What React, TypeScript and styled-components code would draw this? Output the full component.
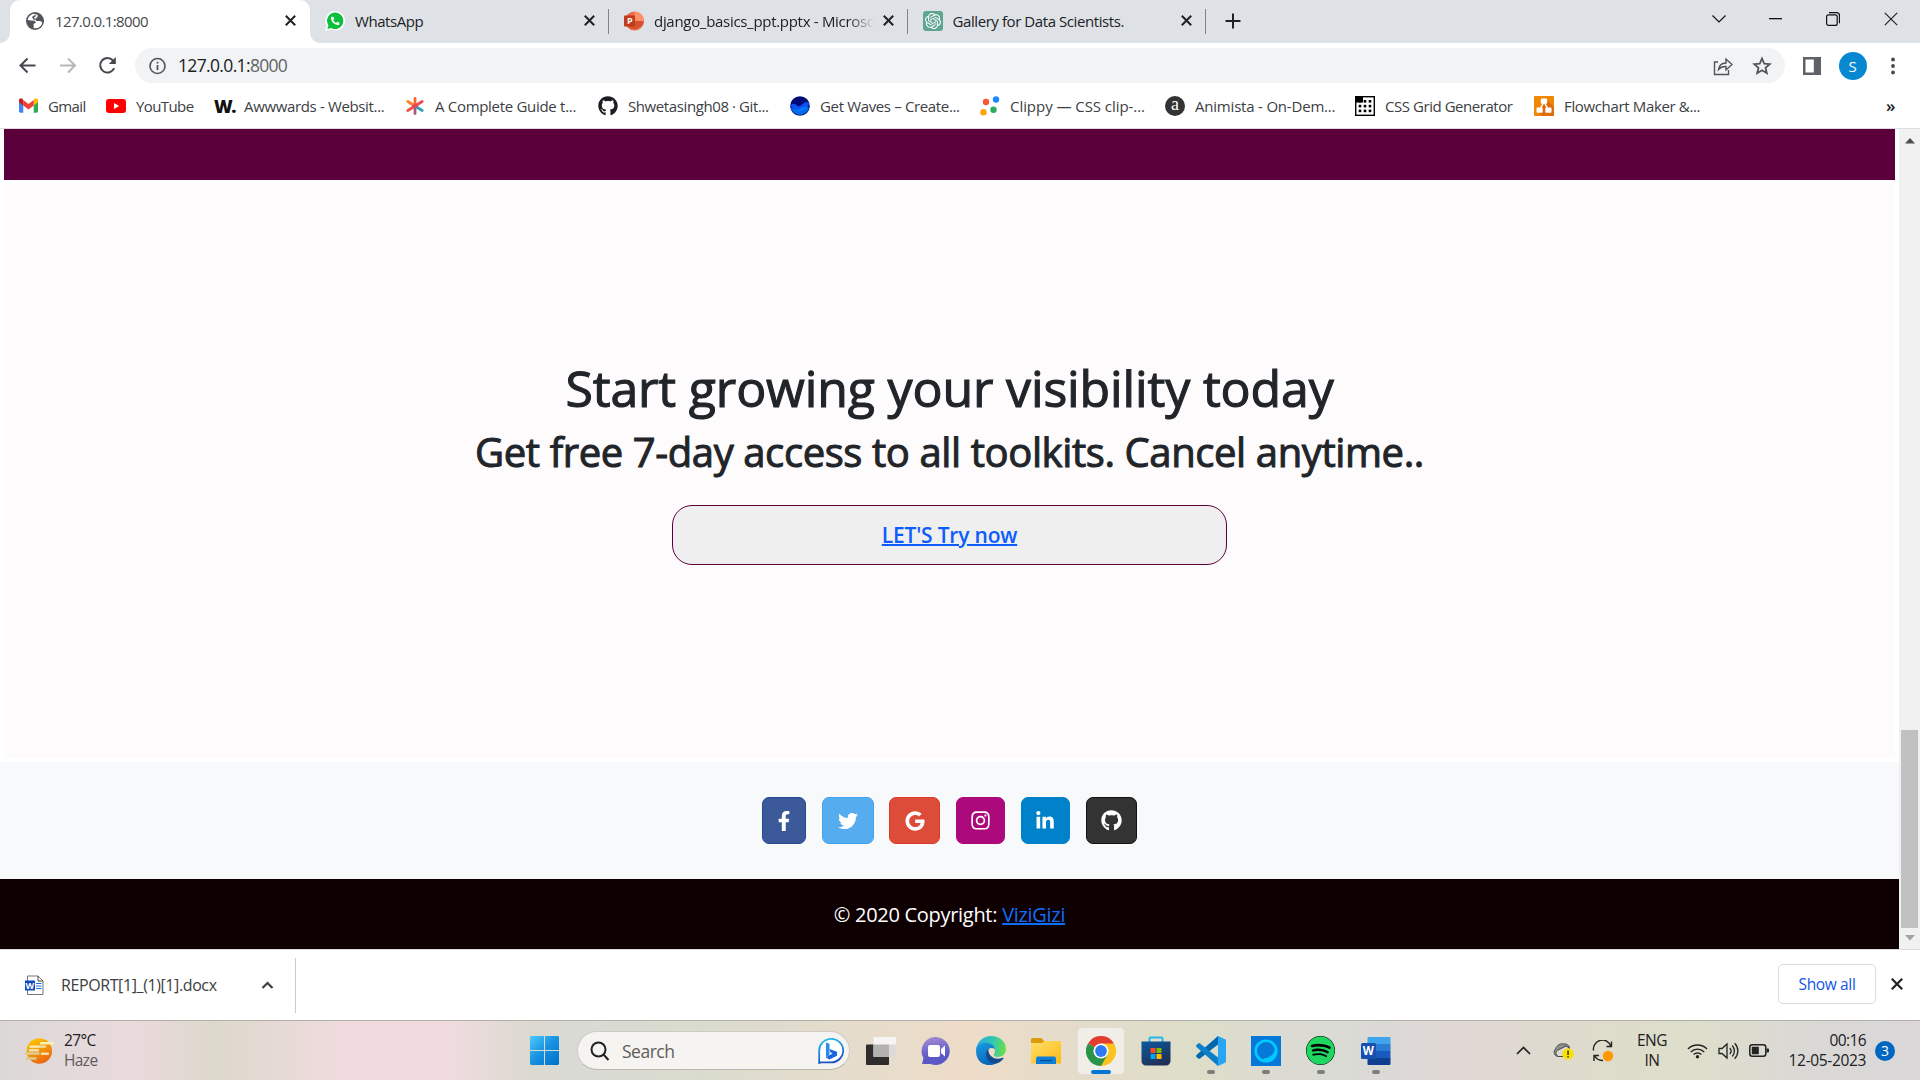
import React from "react";
import styled, { createGlobalStyle } from "styled-components";
import { FaFacebookF, FaTwitter, FaGoogle, FaInstagram, FaLinkedinIn, FaGithub, FaPhoneAlt, FaSpotify } from "react-icons/fa";
import { SiOpenai } from "react-icons/si";

const Global = createGlobalStyle`
  * { box-sizing: border-box; }
  body { margin: 0; overflow: hidden; background: #fff; font-family: "Open Sans", "Noto Sans", sans-serif; }
  svg { display: block; flex: none; }
`;

const Screen = styled.div`
  width: 1920px;
  height: 1080px;
  display: flex;
  flex-direction: column;
  overflow: hidden;
  color: #202124;
`;

const Text = styled.span<{ $size?: number; $track?: number; $color?: string; $weight?: number }>`
  font-size: ${(p) => p.$size ?? 15}px;
  letter-spacing: ${(p) => p.$track ?? -0.4}px;
  color: ${(p) => p.$color ?? "#202124"};
  font-weight: ${(p) => p.$weight ?? 400};
  line-height: 20px;
  white-space: nowrap;
`;

/* ---------- tab strip ---------- */
const TabStrip = styled.div`
  flex: none;
  height: 43px;
  background: #dee1e6;
  display: flex;
  padding-left: 10px;
`;

const Tab = styled.div<{ $active?: boolean; $width: number; $line?: boolean }>`
  position: relative;
  width: ${(p) => p.$width}px;
  height: 43px;
  display: flex;
  align-items: center;
  padding: 0 14px 2px 15px;
  border-radius: 10px 10px 0 0;
  background: ${(p) => (p.$active ? "#fff" : "transparent")};
  &::before, &::after {
    content: "";
    position: absolute;
    bottom: 0;
    width: 10px;
    height: 10px;
    display: ${(p) => (p.$active ? "block" : "none")};
  }
  &::before { left: -10px; background: radial-gradient(circle at 0 0, transparent 9.5px, #fff 10px); }
  &::after { right: -10px; background: radial-gradient(circle at 100% 0, transparent 9.5px, #fff 10px); }
  ${(p) => p.$line && `&::after { display: block; right: 0; bottom: 9px; width: 1px; height: 25px; background: #808387; }`}
`;

const TabTitle = styled.div<{ $fade?: boolean }>`
  flex: 1;
  margin: 0 9px 0 10px;
  overflow: hidden;
  display: flex;
  ${(p) => p.$fade && `mask-image: linear-gradient(90deg, #000 88%, transparent);`}
`;

const NewTab = styled.div`
  width: 54px;
  display: grid;
  place-items: center;
  padding-bottom: 1px;
`;

const WindowButtons = styled.div`
  margin-left: auto;
  height: 37px;
  display: grid;
  grid-template-columns: 57px 57px 58px 58px;
  align-items: center;
  justify-items: center;
`;

/* ---------- toolbar ---------- */
const Toolbar = styled.div`
  flex: none;
  height: 45px;
  display: flex;
  align-items: center;
  padding: 0 17px 0 17px;
  background: #fff;
`;

const NavButtons = styled.div`
  width: 118px;
  display: flex;
  gap: 18.5px;
`;

const Omnibox = styled.div`
  width: 1650px;
  height: 35px;
  border-radius: 18px;
  background: #f1f3f4;
  display: flex;
  align-items: center;
  padding: 0 13px 0 12px;
`;

const Url = styled.div`
  flex: 1;
  margin-left: 11px;
  padding-bottom: 1px;
  display: flex;
`;

const OmniActions = styled.div`
  display: flex;
  align-items: center;
  gap: 19px;
`;

const BrowserActions = styled.div`
  flex: 1;
  display: flex;
  align-items: center;
  justify-content: space-between;
  padding-left: 17px;
`;

const Avatar = styled.div`
  width: 28px;
  height: 28px;
  border-radius: 50%;
  background: #0788d1;
  color: #fff;
  font-size: 15px;
  display: grid;
  place-items: center;
`;

const Bookmarks = styled.div`
  flex: none;
  height: 41px;
  border-bottom: 1px solid #dadce0;
  display: flex;
  align-items: center;
  padding: 0 0 5px 19px;
  background: #fff;
`;

const Bookmark = styled.div<{ $width: number }>`
  width: ${(p) => p.$width}px;
  display: flex;
  align-items: center;
  gap: 10px;
`;

const Glyph = styled.span`
  width: 20px;
  font: 800 18px/20px "Open Sans", sans-serif;
  letter-spacing: -1.5px;
  color: #111;
`;

const Round = styled.span`
  width: 20px;
  height: 20px;
  border-radius: 50%;
  background: #333;
  color: #fff;
  font: 400 18px/17px "Liberation Serif", serif;
  text-align: center;
`;

const More = styled.span`
  margin-left: auto;
  width: 34px;
  font-size: 17px;
  font-weight: 600;
  line-height: 20px;
`;

/* ---------- page ---------- */
const Viewport = styled.div`
  flex: none;
  height: 820px;
  display: flex;
`;

const Page = styled.main`
  width: 1899px;
  display: flex;
  flex-direction: column;
  background: #fff;
`;

const Banner = styled.div`
  height: 51px;
  margin: 0 4px;
  background: #5c003c;
`;

const Hero = styled.section`
  height: 574px;
  margin: 4px 4px;
  background: #fefbfc;
  display: flex;
  flex-direction: column;
  align-items: center;
  padding-top: 174px;
`;

const Title = styled.h1`
  margin: 0;
  font-size: 50px;
  font-weight: 400;
  line-height: 60px;
  letter-spacing: -0.14px;
  color: #212529;
  -webkit-text-stroke: 1.1px #212529;
  white-space: nowrap;
`;

const Subtitle = styled.h2`
  margin: 10px 0 0;
  font-size: 40px;
  font-weight: 400;
  line-height: 48px;
  letter-spacing: -0.4px;
  color: #212529;
  -webkit-text-stroke: 1px #212529;
  white-space: nowrap;
`;

const TryButton = styled.button`
  margin-top: 29px;
  width: 555px;
  height: 60px;
  border: 1px solid #5c003c;
  border-radius: 20px;
  background: #efefef;
  padding: 0;
  font-family: inherit;
`;

const TryLink = styled.a`
  font-size: 21px;
  font-weight: 600;
  letter-spacing: -0.2px;
  color: #0d5cfd;
  text-decoration: underline;
  text-decoration-thickness: 2px;
`;

const Socials = styled.div`
  height: 117px;
  background: #f8f9fb;
  display: flex;
  align-items: center;
  justify-content: center;
  gap: 15.8px;
`;

const Social = styled.a<{ $width: number; $color: string; $edge: string }>`
  width: ${(p) => p.$width}px;
  height: 47px;
  border: 1px solid ${(p) => p.$edge};
  border-radius: 7px;
  background: ${(p) => p.$color};
  color: #fff;
  font-size: 20px;
  display: grid;
  place-items: center;
`;

const Copyright = styled.footer`
  height: 70px;
  background: #0e0001;
  color: #fff;
  font-size: 20px;
  letter-spacing: -0.3px;
  display: flex;
  gap: 5px;
  align-items: center;
  justify-content: center;
`;

const FooterLink = styled.a`
  color: #0d6efd;
  text-decoration: underline;
`;

const Scrollbar = styled.div`
  width: 21px;
  background: #f1f1f1;
  display: flex;
  flex-direction: column;
  align-items: center;
  padding: 9px 0 8px;
`;

const Thumb = styled.div`
  width: 17px;
  height: 198px;
  margin: auto 0 7px;
  background: #c1c1c1;
`;

/* ---------- download shelf ---------- */
const Shelf = styled.div`
  flex: none;
  height: 71px;
  border-top: 1px solid #dadce0;
  background: #fff;
  display: flex;
  align-items: center;
  padding: 0 17px 2px 25px;
`;

const Download = styled.div`
  width: 271px;
  height: 55px;
  margin-top: 2px;
  border-right: 1px solid #c8cacd;
  display: flex;
  align-items: center;
`;

const FileName = styled.div`
  width: 217px;
  padding-left: 17px;
  display: flex;
`;

const ShowAll = styled.button`
  margin-left: auto;
  margin-right: 15px;
  width: 98px;
  height: 40px;
  border: 1px solid #dadce0;
  border-radius: 5px;
  background: #fff;
  padding: 0;
  font-family: inherit;
`;

/* ---------- taskbar ---------- */
const Taskbar = styled.div`
  flex: none;
  height: 60px;
  border-top: 1px solid #b4b1ab;
  background: linear-gradient(90deg, #dcd8d8 0, #eadadc 130px, #ddd8cc 215px, #efdbdd 340px, #efdbde 455px, #dcd9cf 530px, #d9dad5 580px, #d9dccd 700px, #e2dccd 800px, #eddcc8 970px, #e4dccb 1080px, #dddec8 1190px, #dbdbd3 1280px, #dad9d6 1380px, #e0d8d5 1460px, #dedccb 1600px, #dddecb 1700px, #dad9d4 1790px, #dbd7da 1920px);
  display: flex;
  align-items: center;
`;

const Weather = styled.div`
  width: 530px;
  padding-left: 24px;
  display: flex;
  align-items: center;
  gap: 9px;
`;

const Stack = styled.div<{ $align?: string }>`
  display: flex;
  flex-direction: column;
  align-items: ${(p) => p.$align ?? "flex-start"};
  padding-bottom: 2px;
`;

const SearchBox = styled.div`
  width: 273px;
  height: 39px;
  margin: 0 15px 0 18px;
  border: 1px solid #cfccc5;
  border-bottom-color: #b9b6af;
  border-radius: 20px;
  background: #f5f4f1;
  display: flex;
  align-items: center;
  padding: 0 5px 0 12px;
`;

const SearchText = styled.div`
  flex: 1;
  padding-left: 12px;
  display: flex;
`;

const Apps = styled.div`
  display: grid;
  grid-template-columns: repeat(10, 55px);
  height: 59px;
  margin-left: -12px;
`;

const AppSlot = styled.div`
  position: relative;
  display: grid;
  place-items: center;
`;

const ActiveTile = styled.div`
  width: 48px;
  height: 48px;
  border-radius: 5px;
  background: #f1eee7;
  border: 1px solid #e2ded6;
  display: grid;
  place-items: center;
`;

const SpotifyDisc = styled.span`
  border-radius: 50%;
  background: #000;
`;

const Indicator = styled.span<{ $active?: boolean }>`
  position: absolute;
  left: 50%;
  bottom: 6px;
  transform: translateX(-50%);
  width: ${(p) => (p.$active ? 20 : 8)}px;
  height: 4px;
  border-radius: 2px;
  background: ${(p) => (p.$active ? "#0078d4" : "#7f7d79")};
`;

const Tray = styled.div`
  flex: 1;
  display: flex;
  align-items: center;
  justify-content: flex-end;
  padding-right: 25px;
`;

const TrayItem = styled.div<{ $width: number; $end?: boolean }>`
  width: ${(p) => p.$width}px;
  display: grid;
  align-items: center;
  justify-items: ${(p) => (p.$end ? "end" : "center")};
`;

const Badge = styled.div`
  width: 20px;
  height: 20px;
  margin-left: 9px;
  border-radius: 50%;
  background: #0067c0;
  color: #fff;
  font-size: 14px;
  line-height: 19px;
  text-align: center;
`;

/* ---------- drawings ---------- */
const Close = ({ s = 11, w = 2 }: { s?: number; w?: number }) => (
  <svg width={s} height={s} viewBox={`0 0 ${s} ${s}`} stroke="#202124" strokeWidth={w} fill="none"><path d={`M.8 .8L${s - 0.8} ${s - 0.8}M${s - 0.8} .8L.8 ${s - 0.8}`} /></svg>
);

const Globe = () => (
  <svg width="20" height="20" viewBox="0 0 20 20"><circle cx="10" cy="10" r="9" fill="#50555b" /><path d="M8.600 2.800C5.500 3.500 3 5.800 2.700 9l3.300.6 3.800.2 1.200 1.700-2.400 1.600.1 4.100c4 .8 7.900-1.700 8.600-5.700l-2-1.500-3.600-.1-2-1.700 2.700-1.900.4-2.300z" fill="#fff" /><path d="M10.500 4.300L8 6.300l1.500 2.400" fill="none" stroke="#50555b" strokeWidth="1.600" /></svg>
);

const WhatsApp = () => (
  <svg width="20" height="20" viewBox="0 0 20 20"><path d="M10.200 0A9.800 9.800 0 1 1 5.500 18.400L0 20l1.700-5.200A9.800 9.800 0 0 1 10.200 0z" fill="#fff" /><path d="M10.200 1.600A8.200 8.200 0 1 1 6 16.900L2.300 18l1.200-3.600A8.200 8.200 0 0 1 10.200 1.600z" fill="#0abf3a" /><FaPhoneAlt x="5.900" y="5.400" size={8.800} color="#fff" /></svg>
);

const PowerPoint = () => (
  <svg width="20" height="22" viewBox="0 0 20 22"><circle cx="10.500" cy="11" r="9.500" fill="#ed6c47" /><path d="M10.500 1.500A9.500 9.500 0 0 1 20 11h-9.500z" fill="#ff8f6b" /><path d="M1.200 11H20a9.500 9.500 0 0 1-18.800 0z" fill="#d35230" /><rect x="0" y="5.500" width="11" height="11" rx="1" fill="#c13b1b" /><text x="3" y="14.200" fontSize="9" fontWeight="700" fill="#fff" fontFamily="Open Sans">P</text></svg>
);

const Gmail = () => (
  <svg width="19" height="15" viewBox="0 0 20 15"><path d="M0 2v11.500A1.500 1.500 0 0 0 1.500 15H4.500V6z" fill="#4285f4" /><path d="M20 2v11.500a1.500 1.500 0 0 1-1.500 1.500H15.500V6z" fill="#34a853" /><path d="M15.500 1.700V7.500L20 4V2c0-1.800-2-2.700-3.500-1.500z" fill="#fbbc04" /><path d="M4.500 7.500V1.700L10 5.800l5.500-4.100v5.800L10 11.600z" fill="#ea4335" /><path d="M0 2v2l4.500 3.500V1.700L3.500.5C2-.7 0 .2 0 2z" fill="#c5221f" /></svg>
);

const YouTube = () => (
  <svg width="20" height="14" viewBox="0 0 20 14"><rect width="20" height="14" rx="3" fill="#f00" /><path d="M8 4l5.200 3L8 10z" fill="#fff" /></svg>
);

const Asterisk = () => (
  <svg width="20" height="20" viewBox="0 0 20 20" strokeWidth="2.800" strokeLinecap="round" fill="none"><path d="M10 10V2.500" stroke="#f26a2e" /><path d="M10 10L2.800 5.500" stroke="#f98230" /><path d="M10 10l7.200-4.500" stroke="#ee4b52" /><path d="M10 10l-7.200 4.500" stroke="#f0503c" /><path d="M10 10v7.500" stroke="#a9587f" /><path d="M10 10l7.200 4.500" stroke="#2ea3b8" /><path d="M8.500 10h3" stroke="#e8484d" /></svg>
);

const Waves = () => (
  <svg width="20" height="20" viewBox="0 0 20 20"><circle cx="10" cy="10" r="9.800" fill="#000b76" /><path d="M.3 9c3-2.200 5.200-1 7 .7 2.600 2.400 5.200-2.500 8-3.400 1.500-.5 2.800 0 4 .8a9.800 9.800 0 0 1-19 1.900z" fill="#0a50f5" /><path d="M.4 11.500c5 3 7 2.500 9.600 1 3-2 6-2.500 9.300-.5a9.800 9.800 0 0 1-18.900-.5z" fill="#0080ff" opacity=".8" /></svg>
);

const Clippy = () => (
  <svg width="20" height="20" viewBox="0 0 20 20"><circle cx="6" cy="6" r="3.200" fill="#fa5535" /><circle cx="16" cy="3.500" r="3.200" fill="#1e88ff" /><circle cx="3.500" cy="16.300" r="3.200" fill="#ffa500" /><circle cx="13.500" cy="13.700" r="3.200" fill="#27ae60" /></svg>
);

const GridIcon = () => (
  <svg width="20" height="20" viewBox="0 0 20 20"><rect x=".7" y=".7" width="18.600" height="18.600" fill="#fff" stroke="#000" strokeWidth="1.400" /><rect width="8" height="6.500" />{[4, 9, 14].flatMap((x) => [4, 8.800, 13.600].map((y) => <rect key={`${x}-${y}`} x={x - 0.300} y={y} width="2.600" height="2.600" />))}</svg>
);

const Flowchart = () => (
  <svg width="20" height="20" viewBox="0 0 20 20"><rect width="20" height="20" rx="1" fill="#f08705" /><path d="M13 4l7 7v9H8l-4-4z" fill="#df6c0c" /><path d="M10 6l-4.500 8M10 6l4.500 8" stroke="#fff" strokeWidth="1.500" /><g fill="#fff"><rect x="6.800" y="2.500" width="6.400" height="5.200" rx="1" /><rect x="2.500" y="11.500" width="6.200" height="5.200" rx="1" /><rect x="11.300" y="11.500" width="6.200" height="5.200" rx="1" /></g></svg>
);

const WordDoc = () => (
  <svg width="19" height="21" viewBox="0 0 19 21"><path d="M2.500 1h10.500l5 5v13.500H2.500z" fill="#fff" stroke="#777" /><path d="M13 1v5h5" fill="none" stroke="#444" /><path d="M11 8.500h5.500M11 11h5.500M11 13.500h5.500" stroke="#1a73d8" strokeWidth="1.200" /><rect y="5.500" width="10" height="10" fill="#0f4bc0" /><text x=".6" y="13.500" fontSize="9" fontWeight="700" fill="#fff" fontFamily="Open Sans">W</text></svg>
);

const HazeIcon = () => (
  <svg width="31" height="28" viewBox="0 0 31 28"><defs><linearGradient id="sun" x2=".5" y2="1"><stop stopColor="#ffd000" /><stop offset="1" stopColor="#ea6a10" /></linearGradient></defs><circle cx="15.300" cy="14" r="12.700" fill="url(#sun)" /><g stroke="#f3dfae" strokeWidth="2.400" strokeLinecap="round"><path d="M17 6.300h12M6.500 9.600h8" stroke="#fff0b5" /><path d="M15 9.600h6M6 13.200h8M18 16.700h6" /></g><g stroke="#dccb98" strokeWidth="2.400" strokeLinecap="round"><path d="M1.500 16.500h13M2.500 21.500h9" /></g></svg>
);

const WindowsLogo = () => (
  <svg width="29" height="29" viewBox="0 0 29 29"><defs><linearGradient id="win" x2="1" y2="1"><stop stopColor="#4cc9fb" /><stop offset=".5" stopColor="#1591e0" /><stop offset="1" stopColor="#0070cc" /></linearGradient></defs><path d="M1 0h13v14H0V1zM15 0h13l1 1v13H15zM0 15h14v14H1l-1-1zM15 15h14v13l-1 1H15z" fill="url(#win)" /></svg>
);

const Bing = () => (
  <svg width="26" height="26" viewBox="0 0 26 26"><defs><linearGradient id="bing" x2=".3" y2="1"><stop stopColor="#2bc8f2" /><stop offset="1" stopColor="#1c4fc0" /></linearGradient></defs><path d="M1.200 25V13A12 11.800 0 1 1 13 24.400H3z" fill="#fff" stroke="url(#bing)" strokeWidth="1.800" /><path d="M8 4.500l3.500 1.300v11.500L8 19.500z" fill="#2a8cf0" /><path d="M8 19.500l3.500-2.300 3-1.700-2-1-1-3.500 7.500 2.700v4L11.500 21.500z" fill="#1b66dd" /></svg>
);

const TaskView = () => (
  <svg width="30" height="28" viewBox="0 0 30 28"><rect y="7.500" width="23" height="20.500" rx="1" fill="#2e2d2c" /><rect x="7.500" width="22.500" height="20" rx="1" fill="#f6f5f3" /><path d="M7.500 7.500H23V20H7.500z" fill="#b3b2b0" /><path d="M23 7.500h7V20h-7z" fill="#dcdad8" /></svg>
);

const Chat = () => (
  <svg width="30" height="30" viewBox="0 0 30 30"><defs><linearGradient id="chat" x1=".8" y2="1"><stop stopColor="#9b84d2" /><stop offset=".6" stopColor="#5b58c6" /></linearGradient></defs><path d="M15 1a14 14 0 1 1-5.500 27H1l1.500-6A14 14 0 0 1 15 1z" fill="url(#chat)" /><rect x="7" y="9" width="12" height="12" rx="2" fill="#fff" /><path d="M20 13l4-3.500v11L20 17z" fill="#fff" /></svg>
);

const Edge = () => (
  <svg width="30" height="30" viewBox="0 0 30 30"><defs><linearGradient id="e1" y1=".3" x2="1" y2=".4"><stop stopColor="#2aa9e0" /><stop offset=".55" stopColor="#32c6b4" /><stop offset="1" stopColor="#66e04a" /></linearGradient><linearGradient id="e2" x2=".5" y2="1"><stop stopColor="#1b9de2" /><stop offset="1" stopColor="#0a64b8" /></linearGradient></defs><path d="M0 14C1 5 8 0 15 0c9 0 15 6 15 13 0 5-4 8-8 8-3.500 0-4.500-1.500-4-2.500 3-5-1-9-7-9S1 11 0 14z" fill="url(#e1)" /><path d="M0 15C0 9 5 6.500 10 6.800c5 .2 8.500 3 8.500 6-5-2.500-8.500 2-7 7 1.300 4.700 6 7.600 10 6.700C17 31 0 31 0 15z" fill="url(#e2)" /><path d="M12.500 13c-3 2.500-3.500 8 .5 12 4.500 4.500 11 2.500 14.500-2.500.3-.6-.2-1-.8-.7-4 1.800-8.700 1.200-11.500-1.500-2.500-2.500-3-5-2.700-7.300z" fill="#114a8b" /></svg>
);

const Folder = () => (
  <svg width="30" height="28" viewBox="0 0 30 28"><defs><linearGradient id="fold" x2="1" y2="1"><stop stopColor="#ffdf6b" /><stop offset="1" stopColor="#fcb913" /></linearGradient></defs><path d="M0 2.500A1.500 1.500 0 0 1 1.500 1h9l2.500 3h16a1 1 0 0 1 1 1v4H0z" fill="#dc9b08" /><path d="M0 6h11l2.500-2H30v22.500H0z" fill="url(#fold)" /><path d="M5 27v-5.500a2 2 0 0 1 2-2h16a2 2 0 0 1 2 2V27z" fill="#0d7fd6" /><path d="M9 23.500h12" stroke="#074c91" strokeWidth="1.300" /></svg>
);

const Chrome = () => (
  <svg width="30" height="30" viewBox="0 0 30 30"><path d="M15 15L2 7.500A15 15 0 0 1 28 7.500z" fill="#e33b2e" /><path d="M15 15V7.500h13A15 15 0 0 1 15 30z" fill="#fcc31e" /><path d="M15 15l6.500 3.750L15 30A15 15 0 0 1 2 7.500z" fill="#279447" /><circle cx="15" cy="15" r="7.600" fill="#fff" /><circle cx="15" cy="15" r="5.900" fill="#2f7af0" /></svg>
);

const Store = () => (
  <svg width="30" height="30" viewBox="0 0 30 30"><defs><linearGradient id="store" x2=".5" y2="1"><stop stopColor="#0b5a9f" /><stop offset="1" stopColor="#203058" /></linearGradient></defs><path d="M8.500 7V2.500a1 1 0 0 1 1-1h11a1 1 0 0 1 1 1V7" fill="none" stroke="#24b7ea" strokeWidth="2" /><path d="M.5 5.500h29V25a4.500 4.500 0 0 1-4.500 4.500H5A4.500 4.500 0 0 1 .5 25z" fill="url(#store)" /><path d="M9.500 12h5v5h-5z" fill="#f25022" /><path d="M15.500 12h5v5h-5z" fill="#7fba00" /><path d="M9.500 18h5v5h-5z" fill="#00a4ef" /><path d="M15.500 18h5v5h-5z" fill="#ffb900" /></svg>
);

const VsCode = () => (
  <svg width="30" height="30" viewBox="0 0 30 30"><path d="M22 0v8.500L4 22.500c-.6.4-1.200.4-1.700 0L.5 21c-.6-.6-.6-1.400 0-2z" fill="#0067b0" /><path d="M22 30v-8.500L4 7.500c-.6-.4-1.200-.4-1.700 0L.5 9c-.6.6-.6 1.400 0 2z" fill="#0b80c8" /><path d="M22 0l7 3.200c.6.3 1 .8 1 1.500v20.600c0 .7-.4 1.200-1 1.500L22 30c-.8.300-1.500 0-2-.5 .9.500 2 0 2-1.200V1.700C22 .5 20.900 0 20 .5c.5-.5 1.200-.8 2-.5z" fill="#28a5f4" /></svg>
);

const Alexa = () => (
  <svg width="30" height="30" viewBox="0 0 30 30"><path d="M0 0h30v30H0z" fill="#0578d8" /><circle cx="15" cy="15" r="10.300" fill="none" stroke="#00caff" strokeWidth="2.600" /><path d="M12.500 26v-3.400c6-.8 10-3.500 11.500-9.600 2 8-4 13.500-11.500 13z" fill="#00caff" /></svg>
);

const Word = () => (
  <svg width="30" height="30" viewBox="0 0 30 30"><path d="M7.500 1h21a1 1 0 0 1 1 1v6h-23V2a1 1 0 0 1 1-1z" fill="#41a5ee" /><path d="M6.500 8h23v7h-23z" fill="#2b7cd3" /><path d="M6.500 15h23v7h-23z" fill="#185abd" /><path d="M6.500 22h23v6a1 1 0 0 1-1 1h-21a1 1 0 0 1-1-1z" fill="#103f91" /><rect y="7" width="15" height="16" rx="1.500" fill="#174fb0" /><text x="1.800" y="19" fontSize="11.500" fontWeight="700" fill="#fff" fontFamily="Open Sans">W</text></svg>
);

const OpenAiTile = styled.span`
  width: 20px;
  height: 20px;
  border-radius: 3px;
  background: #5fa590;
  display: grid;
  place-items: center;
`;

const tabs = [
  { title: "127.0.0.1:8000", width: 300, icon: <Globe />, track: -0.62, active: true },
  { title: "WhatsApp", width: 299, icon: <WhatsApp />, track: -0.45, line: true },
  { title: "django_basics_ppt.pptx - Microsoft", width: 298.5, icon: <PowerPoint />, track: -0.3, line: true, fade: true },
  { title: "Gallery for Data Scientists.", width: 298.5, icon: <OpenAiTile><SiOpenai size={16} color="#fff" /></OpenAiTile>, track: -0.42, line: true },
];

const bookmarks = [
  { label: "Gmail", width: 87, icon: <Gmail />, track: -0.6 },
  { label: "YouTube", width: 108, icon: <YouTube />, track: -0.6 },
  { label: "Awwwards - Websit...", width: 191, icon: <Glyph>W.</Glyph>, track: -0.35 },
  { label: "A Complete Guide t...", width: 193, icon: <Asterisk />, track: -0.3 },
  { label: "Shwetasingh08 · Git...", width: 192, icon: <FaGithub size={20} color="#1b1f23" />, track: -0.4 },
  { label: "Get Waves – Create...", width: 190, icon: <Waves />, track: -0.35 },
  { label: "Clippy — CSS clip-...", width: 185, icon: <Clippy />, track: -0.05 },
  { label: "Animista - On-Dem...", width: 190, icon: <Round>a</Round>, track: -0.2 },
  { label: "CSS Grid Generator", width: 179, icon: <GridIcon />, track: -0.45 },
  { label: "Flowchart Maker &...", width: 180, icon: <Flowchart />, track: -0.35 },
];

const socials = [
  { width: 44, color: "#3b5998", edge: "#284a92", icon: <FaFacebookF /> },
  { width: 51.5, color: "#55acee", edge: "#41a2ee", icon: <FaTwitter /> },
  { width: 51, color: "#dd4b39", edge: "#dc3a25", icon: <FaGoogle /> },
  { width: 49, color: "#ac0a7c", edge: "#ac0a7c", icon: <FaInstagram size={21} /> },
  { width: 49, color: "#0082ca", edge: "#0082ca", icon: <FaLinkedinIn /> },
  { width: 51, color: "#333333", edge: "#111111", icon: <FaGithub size={21} /> },
];

export default function App() {
  return (
    <Screen>
      <Global />
      <TabStrip>
        {tabs.map((t) => (
          <Tab key={t.title} $width={t.width} $active={t.active} $line={t.line}>
            {t.icon}
            <TabTitle $fade={t.fade}><Text $track={t.track} $color={t.active ? "#45494d" : "#202124"}>{t.title}</Text></TabTitle>
            <Close />
          </Tab>
        ))}
        <NewTab><svg width="16" height="16" viewBox="0 0 16 16" stroke="#202124" strokeWidth="2"><path d="M8 .5v15M.5 8h15" /></svg></NewTab>
        <WindowButtons>
          <svg width="14" height="8" viewBox="0 0 14 8" fill="none" stroke="#111" strokeWidth="1.200"><path d="M.5 .5L7 7 13.500 .5" /></svg>
          <svg width="13" height="2" viewBox="0 0 13 2"><path d="M0 0h13v1.300H0z" fill="#111" /></svg>
          <svg width="14" height="14" viewBox="0 0 14 14" fill="none" stroke="#111" strokeWidth="1.200"><rect x=".6" y="2.800" width="10.600" height="10.600" rx="2" /><path d="M3 .7h7.500a3 3 0 0 1 3 3v7.500" /></svg>
          <Close s={14} w={1.200} />
        </WindowButtons>
      </TabStrip>

      <Toolbar>
        <NavButtons>
          <svg width="21" height="21" viewBox="0 0 21 21" fill="none" stroke="#45494d" strokeWidth="2"><path d="M18.500 10.500H4M10.500 3.500l-7 7 7 7" /></svg>
          <svg width="22" height="21" viewBox="0 0 22 21" fill="none" stroke="#b5b7b9" strokeWidth="2"><path d="M3 10.500h14.500M11 3.500l7 7-7 7" /></svg>
          <svg width="21" height="21" viewBox="0 0 21 21" fill="none" stroke="#45494d" strokeWidth="2"><path d="M17.200 13.200A7.300 7.300 0 1 1 15.800 5.200L18 7.500" /><path d="M18.800 2v7h-7z" fill="#45494d" stroke="none" /></svg>
        </NavButtons>
        <Omnibox>
          <svg width="20" height="20" viewBox="0 0 20 20" fill="none" stroke="#50555a" strokeWidth="1.600"><circle cx="10.500" cy="10" r="7.500" /><path d="M10.500 9v5M10.500 5.800v1.700" strokeWidth="1.800" /></svg>
          <Url><Text $size={17.5} $track={-0.65}>127.0.0.1:</Text><Text $size={17.5} $track={-0.7} $color="#5f6368">8000</Text></Url>
          <OmniActions>
            <svg width="20" height="20" viewBox="0 0 20 20" fill="none" stroke="#50555a" strokeWidth="1.400"><path d="M5 6H1.500v12.500h14V14" /><path d="M5.500 13.500c.5-4 3-6.300 7.500-6.500V3l6 5.500-6 5.500v-3.500c-3.500-.2-5.700.8-7.500 3z" /></svg>
            <svg width="20" height="20" viewBox="0 0 20 20" fill="none" stroke="#50555a" strokeWidth="1.800"><path d="M10 2.500l2.200 5.100 5.500.5-4.200 3.700 1.300 5.400-4.800-2.900-4.800 2.900 1.300-5.400-4.200-3.700 5.500-.5z" /></svg>
          </OmniActions>
        </Omnibox>
        <BrowserActions>
          <svg width="20" height="20" viewBox="0 0 20 20"><path d="M1 1h18v18H1z" fill="#5f6368" /><path d="M3.500 3.500h8.300v13H3.500z" fill="#fff" /></svg>
          <Avatar>S</Avatar>
          <svg width="20" height="20" viewBox="0 0 20 20" fill="#45494d"><circle cx="10" cy="3.500" r="1.900" /><circle cx="10" cy="10" r="1.900" /><circle cx="10" cy="16.500" r="1.900" /></svg>
        </BrowserActions>
      </Toolbar>

      <Bookmarks>
        {bookmarks.map((b) => (
          <Bookmark key={b.label} $width={b.width}>{b.icon}<Text $track={b.track} $color="#3c4043">{b.label}</Text></Bookmark>
        ))}
        <More>»</More>
      </Bookmarks>

      <Viewport>
        <Page>
          <Banner />
          <Hero>
            <Title>Start growing your visibility today</Title>
            <Subtitle>Get free 7-day access to all toolkits. Cancel anytime..</Subtitle>
            <TryButton><TryLink>LET'S Try now</TryLink></TryButton>
          </Hero>
          <Socials>
            {socials.map((s) => <Social key={s.color} $width={s.width} $color={s.color} $edge={s.edge}>{s.icon}</Social>)}
          </Socials>
          <Copyright><span>© 2020 Copyright:</span><FooterLink>ViziGizi</FooterLink></Copyright>
        </Page>
        <Scrollbar>
          <svg width="10" height="6" viewBox="0 0 10 6"><path d="M0 5.500L5 0l5 5.500z" fill="#4d4d4d" /></svg>
          <Thumb />
          <svg width="10" height="6" viewBox="0 0 10 6"><path d="M0 0h10L5 5.500z" fill="#a3a3a3" /></svg>
        </Scrollbar>
      </Viewport>

      <Shelf>
        <Download>
          <WordDoc />
          <FileName><Text $size={16} $track={-0.4} $color="#3c4043">REPORT[1]_(1)[1].docx</Text></FileName>
          <svg width="13" height="8" viewBox="0 0 13 8" fill="none" stroke="#3c4043" strokeWidth="2.200"><path d="M1.500 7l5-5 5 5" /></svg>
        </Download>
        <ShowAll><Text $size={15.5} $track={-0.35} $color="#1155e8">Show all</Text></ShowAll>
        <Close s={12} w={2.2} />
      </Shelf>

      <Taskbar>
        <Weather>
          <HazeIcon />
          <Stack><Text $size={15.5} $track={-0.6}>27°C</Text><Text $size={15.5} $track={-0.6} $color="#5e5c5a">Haze</Text></Stack>
        </Weather>
        <WindowsLogo />
        <SearchBox>
          <svg width="20" height="20" viewBox="0 0 20 20" fill="none" stroke="#222" strokeWidth="2"><circle cx="8.500" cy="8.500" r="7" /><path d="M13.500 13.500l5 5.500" /></svg>
          <SearchText><Text $size={17.5} $track={-0.5} $color="#5e5d5b">Search</Text></SearchText>
          <Bing />
        </SearchBox>
        <Apps>
          <AppSlot><TaskView /></AppSlot>
          <AppSlot><Chat /></AppSlot>
          <AppSlot><Edge /></AppSlot>
          <AppSlot><Folder /></AppSlot>
          <AppSlot><ActiveTile><Chrome /></ActiveTile><Indicator $active /></AppSlot>
          <AppSlot><Store /></AppSlot>
          <AppSlot><VsCode /><Indicator /></AppSlot>
          <AppSlot><Alexa /><Indicator /></AppSlot>
          <AppSlot><SpotifyDisc><FaSpotify size={29} color="#1ed760" /></SpotifyDisc><Indicator /></AppSlot>
          <AppSlot><Word /><Indicator /></AppSlot>
        </Apps>
        <Tray>
          <TrayItem $width={40}><svg width="15" height="9" viewBox="0 0 15 9" fill="none" stroke="#222" strokeWidth="1.700"><path d="M1 8l6.500-6.500L14 8" /></svg></TrayItem>
          <TrayItem $width={40}><svg width="21" height="18" viewBox="0 0 21 18"><path d="M5 14.500a4.300 4.300 0 0 1-2.500-7.500C3.500 3 8 1 11 2c2.500-.5 5 1 5.500 3.500L13 14.500z" fill="#8f8f8f" stroke="#555" /><path d="M5.500 14.500a3.400 3.400 0 0 1-.8-6.300L13 4l3.500 2L12 14.500z" fill="#dcdad5" stroke="#444" /><circle cx="15" cy="12" r="5.800" fill="#fce100" /><path d="M14.300 8.500h1.500v4.500h-1.500zM14.300 14h1.500v1.500h-1.500z" fill="#333" /></svg></TrayItem>
          <TrayItem $width={40}><svg width="22" height="22" viewBox="0 0 22 22" fill="none" stroke="#222" strokeWidth="1.400"><path d="M1.500 10.500A9 9 0 0 1 19 6.500M19.500 1.500v5h-5M2 21v-5.500h5M2.500 15.500a9 9 0 0 0 8.500 5" /><circle cx="16" cy="16" r="5.200" fill="#ff9800" stroke="none" /></svg></TrayItem>
          <TrayItem $width={58}><Stack $align="center"><Text $size={15.5} $track={-0.6}>ENG</Text><Text $size={15.5}>IN</Text></Stack></TrayItem>
          <TrayItem $width={32}><svg width="21" height="16" viewBox="0 0 21 16" fill="none" stroke="#222" strokeWidth="1.400"><path d="M1 6a13.400 13.400 0 0 1 19 0M3.800 8.900a9.400 9.400 0 0 1 13.400 0M6.600 11.600a5.500 5.500 0 0 1 7.800 0" /><circle cx="10.500" cy="13.700" r="1.700" fill="#222" stroke="none" /></svg></TrayItem>
          <TrayItem $width={30}><svg width="21" height="18" viewBox="0 0 21 18" fill="none" stroke="#222" strokeWidth="1.300"><path d="M1 6.500h3l5-4.500v14l-5-4.500H1z" /><path d="M11.800 6a4.500 4.500 0 0 1 0 6M14.200 3.500a8 8 0 0 1 0 11M16.700 1.300a11 11 0 0 1 0 15.400" /></svg></TrayItem>
          <TrayItem $width={32}><svg width="20" height="13" viewBox="0 0 20 13"><rect x=".8" y=".8" width="16" height="11.400" rx="2.500" fill="none" stroke="#222" strokeWidth="1.500" /><path d="M2.800 2.800h7v7.400h-7zM17.500 4.500H19a1 1 0 0 1 1 1v2a1 1 0 0 1-1 1h-1.500z" fill="#222" /></svg></TrayItem>
          <TrayItem $width={91} $end><Stack $align="flex-end"><Text $size={15.5} $track={-0.6}>00:16</Text><Text $size={15.5} $track={-0.35}>12-05-2023</Text></Stack></TrayItem>
          <Badge>3</Badge>
        </Tray>
      </Taskbar>
    </Screen>
  );
}
